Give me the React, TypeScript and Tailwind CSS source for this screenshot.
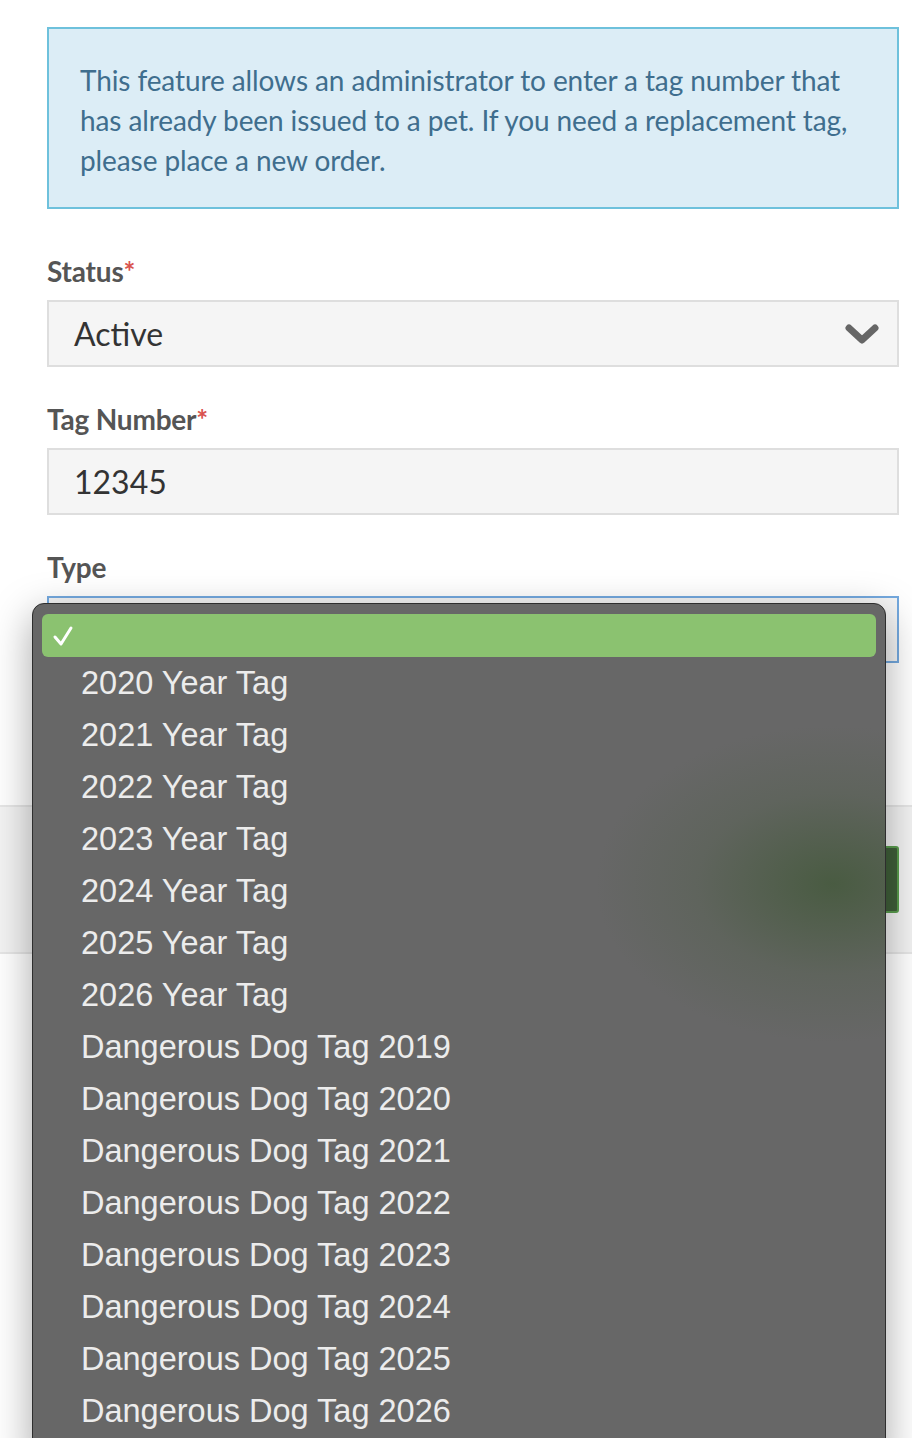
const typeOptions = [
  "2020 Year Tag",
  "2021 Year Tag",
  "2022 Year Tag",
  "2023 Year Tag",
  "2024 Year Tag",
  "2025 Year Tag",
  "2026 Year Tag",
  "Dangerous Dog Tag 2019",
  "Dangerous Dog Tag 2020",
  "Dangerous Dog Tag 2021",
  "Dangerous Dog Tag 2022",
  "Dangerous Dog Tag 2023",
  "Dangerous Dog Tag 2024",
  "Dangerous Dog Tag 2025",
  "Dangerous Dog Tag 2026",
];

const FieldLabel = ({ text, required }: { text: string; required?: boolean }) => (
  <div className="h-[36px] leading-[36px] text-[28px] font-bold text-[#555] tracking-[-0.2px]">
    {text}
    {required && <span className="text-[#d9534f] text-[28px]">*</span>}
  </div>
);

const Chevron = () => (
  <svg width="34" height="22" viewBox="0 0 34 22" className="shrink-0">
    <path
      d="M4 5 L17 17 L30 5"
      fill="none"
      stroke="#666"
      strokeWidth="7"
      strokeLinecap="round"
      strokeLinejoin="round"
    />
  </svg>
);

const TypeMenu = () => (
  <div className="absolute left-[-15px] top-[7px] w-[854px] h-[860px] rounded-[12px] border border-[#2e2e2e] bg-[#676767] shadow-[0_12px_40px_rgba(0,0,0,0.35)] overflow-hidden font-['Liberation_Sans',Arial,sans-serif]">
    <div className="absolute left-[560px] top-[120px] w-[480px] h-[320px] rounded-full bg-[radial-gradient(ellipse_at_center,rgba(70,90,62,0.9),rgba(85,96,80,0.45)_40%,rgba(103,103,103,0)_70%)]" />
    <div className="relative pt-[10px] px-[9px]">
      <div className="h-[43px] rounded-[6px] bg-[#8bc270] flex items-center pl-[10px]">
        <svg width="22" height="22" viewBox="0 0 22 22">
          <path
            d="M3 12 L9 19 L19 3"
            fill="none"
            stroke="white"
            strokeWidth="3"
            strokeLinecap="round"
            strokeLinejoin="round"
          />
        </svg>
      </div>
      {typeOptions.map((opt) => (
        <div
          key={opt}
          className="h-[52px] flex items-center pl-[39px] text-[32.5px] text-[#ececec]"
        >
          {opt}
        </div>
      ))}
    </div>
  </div>
);

export default function App() {
  return (
    <div className="h-[1438px] overflow-hidden bg-white font-['Lato','Noto_Sans',sans-serif]">
      <div className="pl-[47px] pr-[13px] pt-[27px]">
        <div className="border-2 border-[#6ec1dc] bg-[#dcedf6] px-[31px] pt-[31px] pb-[27px] text-[28px] leading-[40px] text-[#3f6e8e] tracking-[-0.1px]">
          This feature allows an administrator to enter a tag number that has
          already been issued to a pet. If you need a replacement tag, please
          place a new order.
        </div>

        <div className="mt-[44px]">
          <FieldLabel text="Status" required />
          <div className="mt-[11px] h-[67px] border-2 border-[#dedede] bg-[#f5f5f5] flex items-center justify-between pl-[25px] pr-[18px]">
            <span className="text-[32px] text-[#333]">Active</span>
            <Chevron />
          </div>
        </div>

        <div className="mt-[34px]">
          <FieldLabel text="Tag Number" required />
          <div className="mt-[11px] h-[67px] border-2 border-[#dedede] bg-[#f5f5f5] flex items-center pl-[25px]">
            <span className="text-[32px] text-[#333]">12345</span>
          </div>
        </div>

        <div className="mt-[34px]">
          <FieldLabel text="Type" />
          <div className="relative mt-[11px]">
            <div className="h-[67px] border-2 border-[#74a9df] bg-[#f5f5f5]" />
            <TypeMenu />
          </div>
        </div>
      </div>

      <div className="mt-[142px] h-[149px] border-y-2 border-[#e6e6e6] bg-[#f3f3f3] flex items-center justify-end pr-[13px]">
        <div className="w-[140px] h-[67px] rounded-[3px] border-2 border-[#5a9e4e] bg-[#40603a]" />
      </div>
    </div>
  );
}
